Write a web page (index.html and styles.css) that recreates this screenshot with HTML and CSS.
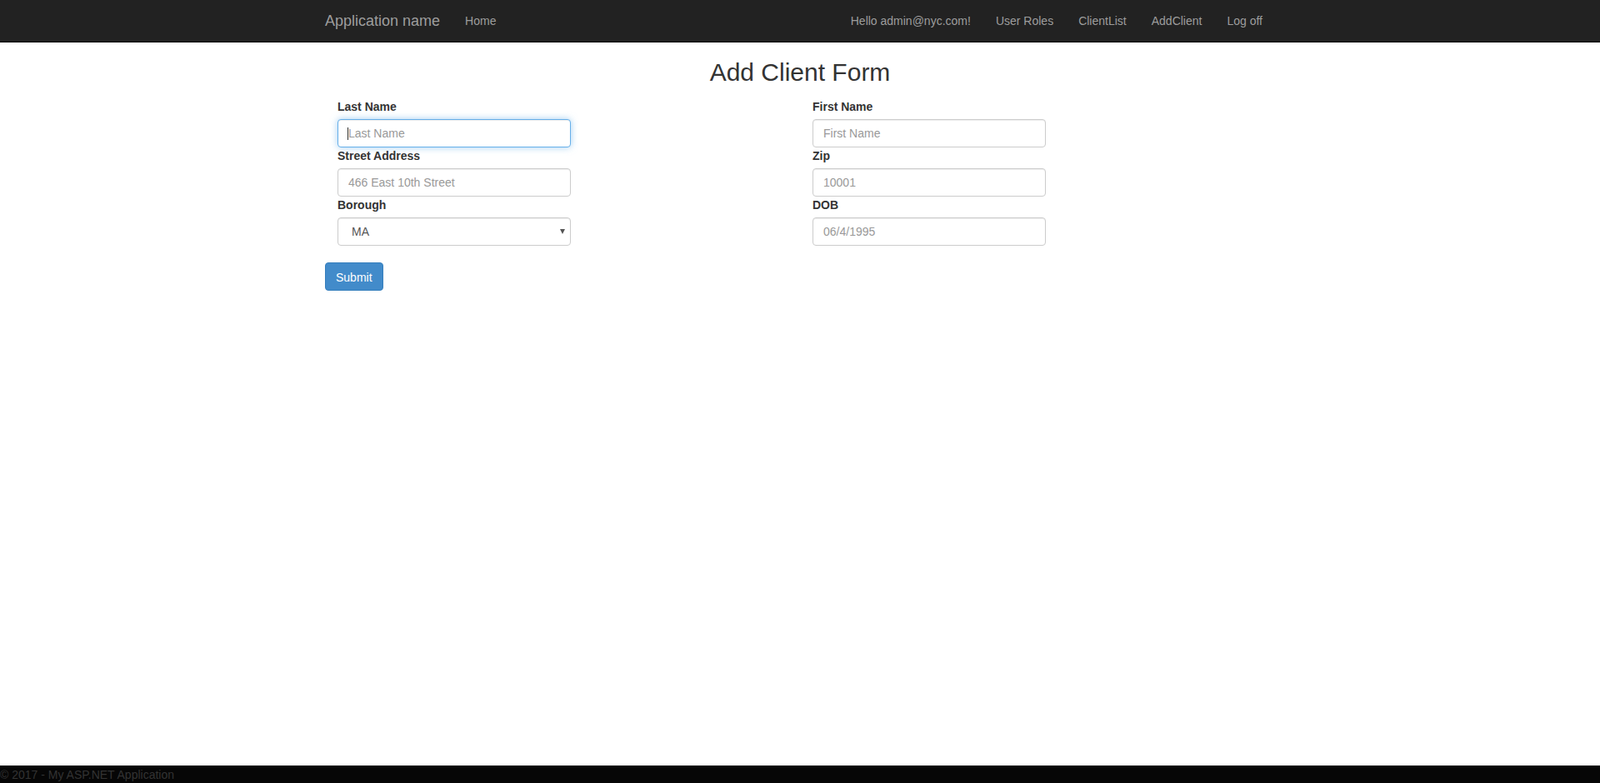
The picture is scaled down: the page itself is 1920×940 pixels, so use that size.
FILE: index.html
```html
<!DOCTYPE html>
<html lang="en">
<head>
<meta charset="utf-8">
<title>Add Client - My ASP.NET Application</title>
<link rel="stylesheet" href="styles.css">
</head>
<body>
<header class="navbar">
  <div class="container nav-inner">
    <a class="brand" href="#">Application name</a>
    <ul class="nav">
      <li><a href="#">Home</a></li>
    </ul>
    <ul class="nav nav-right">
      <li><a href="#">Hello admin@nyc.com!</a></li>
      <li><a href="#">User Roles</a></li>
      <li><a href="#">ClientList</a></li>
      <li><a href="#">AddClient</a></li>
      <li><a href="#">Log off</a></li>
    </ul>
  </div>
</header>

<main class="container body-content">
  <h2 class="page-title">Add Client Form</h2>
  <form class="client-form">
    <div class="form-grid">
      <div class="field field-left">
        <label for="lastName">Last Name</label>
        <div class="input-wrap">
          <input id="lastName" class="form-control is-focused" type="text" placeholder="Last Name">
          <span class="caret"></span>
        </div>
      </div>
      <div class="field">
        <label for="firstName">First Name</label>
        <input id="firstName" class="form-control" type="text" placeholder="First Name">
      </div>
      <div class="field field-left">
        <label for="street">Street Address</label>
        <input id="street" class="form-control" type="text" placeholder="466 East 10th Street">
      </div>
      <div class="field">
        <label for="zip">Zip</label>
        <input id="zip" class="form-control" type="text" placeholder="10001">
      </div>
      <div class="field field-left">
        <label for="borough">Borough</label>
        <div class="input-wrap">
          <select id="borough" class="form-control select">
            <option>MA</option>
            <option>BK</option>
            <option>QN</option>
            <option>BX</option>
            <option>SI</option>
          </select>
          <span class="select-arrow"></span>
        </div>
      </div>
      <div class="field">
        <label for="dob">DOB</label>
        <input id="dob" class="form-control" type="text" placeholder="06/4/1995">
      </div>
    </div>
    <button type="submit" class="btn-primary">Submit</button>
  </form>
</main>

<footer class="site-footer">
  <p>&copy; 2017 - My ASP.NET Application</p>
</footer>
</body>
</html>
```

FILE: styles.css
```css
* {
  box-sizing: border-box;
}

html, body {
  height: 100%;
}

body {
  margin: 0;
  font-family: "Liberation Sans", Arial, Helvetica, sans-serif;
  font-size: 14px;
  line-height: 20px;
  color: #333;
  background: #fff;
  display: flex;
  flex-direction: column;
  min-height: 100vh;
}

a {
  text-decoration: none;
}

.container {
  width: 1170px;
  margin: 0 auto;
  padding: 0 15px;
}

/* Navbar */
.navbar {
  background: #222;
  border-bottom: 1px solid #080808;
  height: 51px;
  flex: none;
}

.nav-inner {
  display: flex;
  align-items: flex-start;
  height: 50px;
}

.brand {
  display: block;
  margin-left: -15px;
  padding: 15px;
  height: 50px;
  font-size: 18px;
  line-height: 20px;
  color: #9d9d9d;
}

.nav {
  display: flex;
  list-style: none;
  margin: 0;
  padding: 0;
}

.nav a {
  display: block;
  padding: 15px;
  line-height: 20px;
  font-size: 14px;
  color: #9d9d9d;
}

.nav-right {
  margin-left: auto;
}

/* Content */
.body-content {
  flex: 1 0 auto;
}

.page-title {
  margin: 19px 0 15px;
  font-size: 30px;
  line-height: 33px;
  font-weight: 500;
  text-align: center;
  color: #333;
}

.form-grid {
  display: grid;
  grid-template-columns: 1fr 1fr;
  column-gap: 30px;
}

.field-left {
  padding-left: 15px;
}

.field label {
  display: block;
  font-weight: bold;
  font-size: 14px;
  line-height: 20px;
  margin-bottom: 5px;
  color: #333;
}

.input-wrap {
  position: relative;
  width: 280px;
}

.form-control {
  display: block;
  width: 280px;
  height: 34px;
  padding: 6px 12px;
  font-family: inherit;
  font-size: 14px;
  line-height: 20px;
  color: #555;
  background: #fff;
  border: 1px solid #ccc;
  border-radius: 4px;
  box-shadow: inset 0 1px 1px rgba(0, 0, 0, 0.075);
  outline: none;
  margin: 0;
}

.form-control::placeholder {
  color: #999;
  opacity: 1;
}

.form-control.is-focused,
.form-control:focus {
  border-color: #66afe9;
  box-shadow: inset 0 1px 1px rgba(0, 0, 0, 0.075), 0 0 8px rgba(102, 175, 233, 0.6);
}

.caret {
  position: absolute;
  left: 12px;
  top: 10px;
  width: 1px;
  height: 15px;
  background: #333;
  pointer-events: none;
}

.select {
  appearance: none;
  -webkit-appearance: none;
  padding-left: 16px;
  color: #555;
}

.select-arrow {
  position: absolute;
  right: 7px;
  top: 14px;
  width: 0;
  height: 0;
  border-left: 3px solid transparent;
  border-right: 3px solid transparent;
  border-top: 6px solid #555;
  pointer-events: none;
}

.btn-primary {
  display: block;
  margin-top: 20px;
  height: 34px;
  padding: 7px 12px 5px;
  font-family: inherit;
  font-size: 14px;
  line-height: 20px;
  color: #fff;
  background: #428bca;
  border: 1px solid #357ebd;
  border-radius: 4px;
  cursor: pointer;
}

/* Footer */
.site-footer {
  flex: none;
  height: 21px;
  background: #060606;
  color: #333;
  padding-top: 1px;
}

.site-footer p {
  margin: 0;
  font-size: 14px;
  line-height: 20px;
}
```
